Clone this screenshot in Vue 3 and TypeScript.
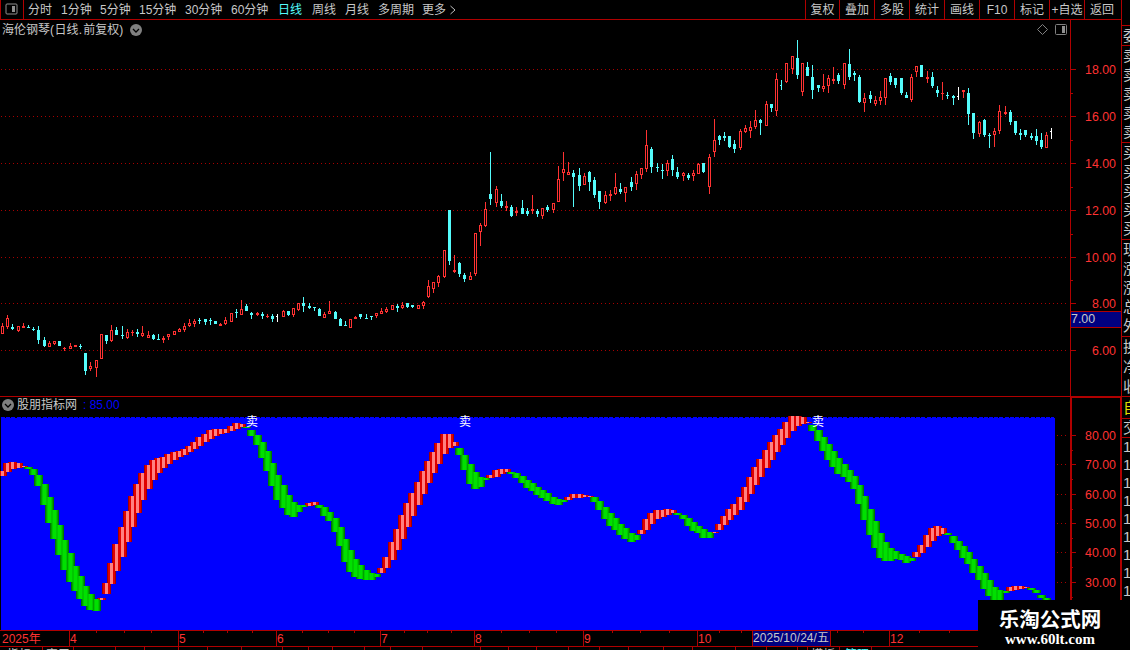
<script setup lang="ts">
type Tone = 'r' | 'c' | 'w'
interface Candle { x: number; hi: number; top: number; bot: number; lo: number; tone: Tone }
interface Bar { x: number; top: number; bot: number; up: boolean }

// x, high, body top, body bottom, low, tone
const candleRows = `
2 323 326 334 334 r|7 315 318 327 329 r|12 324 327 329 330 c|18 326 326 331 332 r|23 323 326 328 328 r|28 325 327 328 328 c|33 327 329 330 331 c|38 326 330 340 344 c|44 337 340 346 347 c|49 341 343 347 347 r|54 341 341 344 345 r|59 341 341 346 346 c|64 347 348 349 351 r|70 343 346 349 349 r|75 345 345 347 347 r|80 344 346 347 349 c|85 353 353 371 375 c|90 362 366 369 371 r|96 360 360 368 377 r|101 334 334 359 359 r
106 335 335 341 344 c|111 325 330 341 342 r|116 327 330 335 335 c|122 326 335 336 339 c|127 329 332 338 339 r|132 330 332 333 336 r|137 329 332 334 337 c|142 326 333 336 337 r|148 331 335 338 338 r|153 334 335 339 340 c|158 334 339 340 340 c|163 336 338 340 343 r|168 334 334 337 340 r|174 331 331 335 335 r|179 328 329 332 332 r|184 323 326 330 332 r|189 319 323 326 327 r|194 319 321 324 327 r|199 318 320 321 324 c
205 319 319 322 325 c|210 318 320 321 325 c|215 321 321 324 324 c|220 323 324 326 326 r|225 317 320 324 325 r|231 313 313 322 322 r|236 309 312 313 318 c|241 300 309 315 315 r|246 304 306 311 311 c|251 312 313 315 319 c|257 312 313 315 316 r|262 312 314 316 319 c|267 314 316 317 318 r|272 314 316 319 322 c|277 314 316 317 322 w|283 310 311 317 317 r|288 311 311 315 316 c|293 308 308 315 317 r|298 303 303 310 311 r
303 297 303 306 312 c|309 303 306 308 309 c|314 307 307 308 311 c|319 308 309 316 316 c|324 312 314 318 318 r|329 301 311 314 314 r|335 311 312 319 319 c|340 318 319 326 326 c|345 321 325 326 326 c|350 319 319 328 328 r|355 316 317 319 319 r|360 314 314 317 319 c|366 314 318 319 319 c|371 316 316 317 320 c|376 313 313 316 318 r|381 308 311 314 314 r|386 307 309 312 313 r|392 305 305 310 310 r|397 304 306 308 312 c
402 302 305 308 309 r|407 303 303 307 308 c|412 305 305 307 308 c|418 305 305 309 309 r|423 301 302 306 309 r|428 280 286 297 298 r|433 282 282 289 293 r|438 275 276 283 287 r|444 250 250 277 278 r|449 210 210 261 265 c|454 255 270 272 273 r|459 262 263 274 277 c|464 273 275 279 282 c|470 272 276 280 280 r|475 233 233 274 276 r|480 223 225 232 246 r|485 202 209 226 227 r|490 152 194 199 205 c|496 186 189 203 207 r
501 194 201 206 208 c|506 201 206 208 211 r|511 205 207 216 217 c|516 207 211 213 216 r|522 200 208 214 214 c|527 208 211 214 216 c|532 195 209 211 214 r|537 209 211 214 217 c|542 208 208 216 219 r|547 205 207 210 212 c|553 203 203 210 213 r|558 166 179 202 202 r|563 152 169 173 181 r|568 162 172 175 175 r|573 170 173 177 207 c|579 168 175 186 191 c|584 173 176 185 185 r|589 171 172 182 191 c|594 177 180 195 198 c
599 191 191 202 209 c|605 191 195 203 204 r|610 190 194 196 201 r|615 173 187 194 195 r|620 183 189 192 194 c|625 187 187 193 202 r|631 177 182 187 191 c|636 171 174 184 190 r|641 168 168 175 179 r|646 130 145 169 172 r|651 147 149 167 173 c|657 163 167 168 172 c|662 164 170 171 179 c|667 160 163 171 176 r|672 155 159 170 176 c|677 167 172 177 179 c|683 172 173 176 181 r|688 173 175 178 180 c|693 170 173 176 181 r
698 163 164 174 174 r|703 163 163 172 173 c|709 154 157 187 194 r|714 119 140 152 157 r|719 135 136 140 145 c|724 132 136 138 141 c|729 136 136 147 148 c|734 140 144 149 153 c|740 129 131 148 150 r|745 125 128 132 133 r|750 121 127 131 138 r|755 110 120 127 129 r|760 119 120 123 135 c|766 101 104 126 126 r|771 104 104 108 112 c|776 73 79 111 116 r|781 80 85 86 90 c|786 63 63 82 83 r|792 56 56 69 74 r
797 40 58 75 79 c|802 63 63 92 96 r|807 62 67 76 76 c|812 65 77 90 99 c|818 85 85 88 92 c|823 74 86 89 92 r|828 75 78 86 93 r|833 67 79 81 84 r|838 73 75 81 84 c|844 63 63 85 89 r|849 49 64 77 80 c|854 71 73 75 81 c|859 75 77 102 103 c|864 93 98 103 112 r|870 91 95 99 103 c|875 96 100 104 106 r|880 91 97 101 105 r|885 78 78 98 105 r|890 73 76 82 85 c|895 78 78 85 88 c
901 78 78 93 95 c|906 92 95 98 98 c|911 74 77 100 102 r|916 66 66 72 77 r|921 65 65 77 77 c|927 71 77 79 83 r|932 72 77 86 88 c|937 86 90 93 97 c|942 82 93 94 100 r|947 92 95 96 99 c|953 95 96 98 105 c|958 87 96 97 100 w|963 90 90 92 98 r|968 88 93 114 125 c|973 113 113 133 139 c|979 121 122 134 137 r|984 119 120 135 137 c|989 133 135 136 148 c|994 128 131 135 147 r
999 105 111 131 134 r|1005 106 112 114 115 r|1010 110 112 122 125 c|1015 121 121 133 135 c|1020 129 133 135 140 c|1025 130 130 135 137 c|1031 133 136 138 140 c|1036 129 136 141 145 c|1041 133 140 147 149 c|1046 132 135 148 148 r|1051 128 131 132 139 w`

const candles: Candle[] = candleRows.trim().split(/[|\n]/).map(s => {
  const p = s.trim().split(' ')
  return { x: +p[0], hi: +p[1], top: +p[2], bot: +p[3], lo: +p[4], tone: p[5] as Tone }
})

// top-bottom of each ribbon bar, one per candle; r = rising, g = falling
const ribbonRuns: [string, string][] = [
  ['r', '471-476 463-472 462-469 463-468 466-467'],
  ['g', '467-469 469-475 475-486 484-505 497-523 510-539 525-555 540-570 553-582 566-591 576-599 586-606 594-610 599-611'],
  ['r', '598-600 583-594 563-584 544-571 527-557 511-542 496-527 484-513 473-500 465-489 460-480 458-473 457-468 454-464 452-460 451-457 449-455 446-452 442-449 437-446 434-442 430-439 429-436 429-434 429-433 426-431 423-429 424-427'],
  ['g', '427-428 430-436 435-445 442-458 451-471 463-486 475-500 485-508 495-515 502-517 505-512 505-507'],
  ['r', '503-506 502-505'],
  ['g', '505-508 507-516 512-521 518-532 527-546 539-562 550-572 559-577 565-579 570-580 573-580 574-577'],
  ['r', '568-573 557-568 542-560 529-550 515-539 503-527 493-516 482-505 471-494 461-483 452-473 443-464 434-454 434-448 442-446'],
  ['g', '448-455 455-470 464-484 472-489 477-487 478-480'],
  ['r', '475-478 470-477 469-474 469-472'],
  ['g', '472-474 473-478 476-483 480-488 483-491 487-495 490-498 493-501 497-504 499-505 500-502'],
  ['r', '497-500 494-498 494-498 495-497 496-497'],
  ['g', '497-502 501-510 507-519 513-526 518-530 524-535 528-539 533-542 535-540'],
  ['r', '530-534 519-530 513-524 510-519 510-517 509-515 510-513'],
  ['g', '513-515 515-519 518-526 522-531 526-533 529-538 532-538'],
  ['r', '532-533 524-530 516-525 509-520 504-515 497-510 487-502 477-494 467-485 459-477 450-468 442-460 435-452 429-445 422-438 416-431 416-426 417-424 422-423'],
  ['g', '425-431 430-441 437-451 444-460 451-467 458-474 464-477 470-482 476-489 485-504 496-520 509-535 521-548 533-558 542-561 548-561 551-559 554-560 556-563 558-561'],
  ['r', '552-557 545-553 535-547 528-541 526-536 528-534'],
  ['g', '533-535 536-543 541-550 546-558 552-564 559-573 566-580 573-589 580-596 587-603 590-601 591-593'],
  ['r', '587-591 586-590 586-589 587-588'],
  ['g', '588-590 590-593 595-598 598-602'],
]
const bars: Bar[] = []
for (const [dir, run] of ribbonRuns) {
  for (const seg of run.split(' ')) {
    const [top, bot] = seg.split('-').map(Number)
    if (bars.length < candles.length) bars.push({ x: candles[bars.length].x, top, bot, up: dir === 'r' })
  }
}

// ribbon shading, widest and darkest layer first
const layers = [
  { half: 4, up: '#a00000', down: '#007800' },
  { half: 3, up: '#e00000', down: '#00a000' },
  { half: 2, up: '#e00000', down: '#00c800' },
  { half: 1, up: '#ff8080', down: '#00e000' },
]

const colour: Record<Tone, string> = { r: '#ff3232', c: '#54fcfc', w: '#ffffff' }
const isTick = (c: Candle) => c.bot - c.top === 1 && (c.tone === 'w' || c.x === 781)
const isHollow = (c: Candle) => c.tone === 'r' && c.bot - c.top > 2

const priceAxis = [['18.00', 69], ['16.00', 116], ['14.00', 163], ['12.00', 210], ['10.00', 257], ['8.00', 303], ['6.00', 350]] as [string, number][]
const priceMinor = [93, 140, 187, 234, 280]
const indAxis = [['80.00', 435], ['70.00', 464], ['60.00', 494], ['50.00', 523], ['40.00', 552], ['30.00', 582]] as [string, number][]
const indMinor = [450, 479, 509, 538, 567, 597]

const periods = [['分时', 33], ['1分钟', 39], ['5分钟', 39], ['15分钟', 46], ['30分钟', 46], ['60分钟', 47], ['日线', 34], ['周线', 33], ['月线', 33], ['多周期', 44], ['更多', 28]] as [string, number][]
const tools = ['复权', '叠加', '多股', '统计', '画线', 'F10', '标记', '+自选', '返回']

const months = [['2025年', -1], ['4', 69], ['5', 178], ['6', 276], ['7', 380], ['8', 474], ['9', 583], ['10', 697], ['12', 889]] as [string, number][]
const weekTicks = [96, 124, 151, 203, 227, 252, 302, 328, 354, 404, 427, 451, 501, 529, 556, 612, 640, 669, 719, 741, 837, 863, 919, 949]
const tabTicks = [42, 73, 115, 144, 178, 207, 241, 282, 308, 332, 364, 390, 422, 480, 508, 536, 568, 599, 628, 663, 692, 735, 766, 797, 807, 839, 871]
const sellMarks = [246, 459, 812]

const sideRows: { t: string; h: number; line?: boolean; k?: string }[] = [
  { t: '', h: 26, line: true }, { t: '委', h: 20, line: true },
  ...['卖', '卖', '卖', '卖', '卖'].map((t, i) => ({ t, h: i === 4 ? 21 : 19, line: i === 4 })),
  ...['买', '买', '买', '买', '买'].map((t, i) => ({ t, h: i === 4 ? 21 : 19, line: i === 4 })),
  ...['现', '涨', '涨', '总', '外'].map((t, i) => ({ t, h: i === 4 ? 21 : 19, line: i === 4 })),
  { t: '换', h: 20 }, { t: '净', h: 20 }, { t: '收', h: 20, line: true },
  { t: '自', h: 22, line: true, k: 'own' }, { t: '交', h: 19, line: true },
  ...Array.from({ length: 9 }, () => ({ t: '1', h: 18, k: 'num' })),
]
</script>

<template>
  <div class="app">
    <div class="main">
      <header class="toolbar">
        <span class="layout">
          <svg width="13" height="12" viewBox="0 0 13 12"><rect x="1" y="1" width="11" height="10" rx="1" fill="none" stroke="#909090" /><rect x="7" y="3" width="3" height="6" fill="#909090" /></svg>
        </span>
        <nav class="periods">
          <span v-for="[t, w] in periods" :key="t" :class="{ active: t === '日线' }" :style="{ width: w + 'px' }">{{ t }}</span>
          <svg width="6" height="10" viewBox="0 0 6 10"><path d="M0.5 1 L5 5 L0.5 9" fill="none" stroke="#c0c0c0" /></svg>
        </nav>
        <nav class="tools"><span v-for="t in tools" :key="t">{{ t }}</span></nav>
      </header>

      <section class="price">
        <svg class="plot" width="1121" height="376" viewBox="0 20 1121 376" shape-rendering="crispEdges">
          <line v-for="[t, y] in priceAxis" :key="t" x1="1" :y1="y + 0.5" x2="1067" :y2="y + 0.5" stroke="#a80000" stroke-dasharray="1 3" />
          <g v-for="c in candles" :key="c.x">
            <rect :x="c.x" :y="c.hi" width="1" :height="Math.max(1, c.lo - c.hi)" :fill="colour[c.tone]" />
            <rect v-if="isTick(c)" :x="c.x - 1" :y="c.top" width="1" height="1" :fill="colour[c.tone]" />
            <rect v-else :x="c.x - 1" :y="c.top" width="3" :height="c.bot - c.top" :fill="colour[c.tone]" />
            <rect v-if="isHollow(c)" :x="c.x" :y="c.top + 1" width="1" :height="c.bot - c.top - 2" fill="#000" />
          </g>
          <rect x="1070" y="20" width="1" height="376" fill="#b00000" />
          <g v-for="[t, y] in priceAxis" :key="'a' + t">
            <rect x="1071" :y="y" width="5" height="1" fill="#b00000" />
            <text class="scale" x="1116" :y="y + 5">{{ t }}</text>
          </g>
          <rect v-for="y in priceMinor" :key="y" x="1071" :y="y" width="2" height="1" fill="#b00000" />
          <rect x="1071" y="311" width="50" height="17" fill="#b00000" />
          <rect x="1071" y="312" width="50" height="15" fill="#000080" />
          <text class="cursor" x="1071" y="323">7.00</text>
          <g shape-rendering="auto" fill="none" stroke="#808080">
            <path d="M1042.5 24.5 L1047.5 29.5 L1042.5 34.5 L1037.5 29.5 Z" />
            <rect x="1055.5" y="24.5" width="11" height="10" rx="1" />
            <rect x="1062" y="26" width="3" height="7" fill="#909090" stroke="none" />
          </g>
        </svg>
        <h1 class="title">海伦钢琴<i>(</i>日线<i>.</i>前复权<i>)</i><svg width="12" height="12" viewBox="0 0 12 12"><circle cx="6" cy="6" r="6" fill="#808080" /><path d="M3 5 L6 8 L9 5" fill="none" stroke="#000" stroke-width="1.3" /></svg></h1>
      </section>

      <section class="indicator">
        <svg class="plot" width="1121" height="234" viewBox="0 396 1121 234" shape-rendering="crispEdges">
          <rect x="0" y="396" width="1121" height="1" fill="#b00000" />
          <rect x="1070" y="396" width="51" height="2" fill="#b00000" />
          <rect x="1070" y="396" width="2" height="234" fill="#b00000" />
          <rect x="1120" y="396" width="1" height="234" fill="#b00000" />
          <rect x="1" y="418" width="1054" height="212" fill="#0000ff" />
          <line x1="1" y1="417.5" x2="1054" y2="417.5" stroke="#0000ff" stroke-dasharray="4 1.2" />
          <g v-for="l in layers" :key="l.half">
            <rect v-for="b in bars" :key="b.x" :x="b.x - l.half" :y="b.top" :width="l.half * 2 + 1" :height="b.bot - b.top" :fill="b.up ? l.up : l.down" />
          </g>
          <text v-for="x in sellMarks" :key="x" class="sell" :x="x" y="426">卖</text>
          <g v-for="[t, y] in indAxis" :key="t">
            <line x1="1057" :y1="y + 0.5" x2="1067" :y2="y + 0.5" stroke="#a80000" stroke-dasharray="1 3" />
            <rect x="1071" :y="y" width="5" height="1" fill="#b00000" />
            <text class="scale" x="1116" :y="y + 5">{{ t }}</text>
          </g>
          <rect v-for="y in indMinor" :key="y" x="1072" :y="y" width="1" height="1" fill="#b00000" />
        </svg>
        <h2 class="title"><svg width="12" height="12" viewBox="0 0 12 12"><circle cx="6" cy="6" r="6" fill="#808080" /><path d="M3 5 L6 8 L9 5" fill="none" stroke="#000" stroke-width="1.3" /></svg>股朋指标网<b>: 85.00</b></h2>
      </section>

      <footer class="timeline">
        <svg width="1121" height="20" viewBox="0 630 1121 20" shape-rendering="crispEdges">
          <rect x="0" y="630" width="1121" height="1" fill="#b00000" />
          <rect x="0" y="646" width="1121" height="1" fill="#b00000" />
          <rect v-for="x in weekTicks" :key="x" :x="x" y="631" width="1" height="2" fill="#b00000" />
          <g v-for="[t, x] in months" :key="t">
            <rect :x="x" y="630" width="1" height="16" fill="#b00000" />
            <text class="month" :x="x < 0 ? 2 : x + 1" y="643">{{ t }}</text>
          </g>
          <rect x="752" y="631" width="79" height="15" fill="#b00000" />
          <rect x="753" y="631" width="77" height="15" fill="#000080" />
          <text class="date" x="753" y="642" textLength="76">2025/10/24/五</text>
          <rect v-for="x in tabTicks" :key="'t' + x" :x="x" y="647" width="1" height="3" fill="#b00000" />
          <text class="tab" x="7" y="659">指标</text>
          <text class="tab" x="46" y="659">窗口</text>
          <text class="tab" x="811" y="659">模板</text>
          <text class="tab on" x="845" y="659">管理</text>
        </svg>
      </footer>
    </div>

    <aside class="side">
      <div v-for="(r, i) in sideRows" :key="i" class="row" :class="[r.k, { line: r.line }]" :style="{ height: r.h + 'px' }">{{ r.t }}</div>
    </aside>

    <div class="brand"><strong>乐淘公式网</strong><span>www.60lt.com</span></div>
  </div>
</template>

<style>
html, body { background: #000; overflow: hidden; }
</style>

<style scoped>
.app { position: relative; width: 1130px; height: 650px; overflow: hidden; display: grid; grid-template-columns: 1121px 9px; background: #000; color: #c8c8c8; font: 12px/18px "Liberation Sans", "Noto Sans CJK SC", sans-serif; }
.main { display: flex; flex-direction: column; height: 650px; }
svg { display: block; }
.toolbar { display: flex; height: 20px; box-sizing: border-box; border-bottom: 1px solid #b00000; }
.layout { width: 24px; box-sizing: border-box; border-left: 1px solid #b00000; border-right: 1px solid #b00000; padding: 3px 0 0 4px; }
.periods { display: flex; flex: 1; align-items: center; padding-left: 4px; white-space: nowrap; }
.periods .active { color: #54fcfc; }
.tools { display: flex; width: 316px; }
.tools span { width: 35px; box-sizing: border-box; border-left: 1px solid #b00000; text-align: center; line-height: 20px; height: 19px; white-space: nowrap; }
.tools span:first-child { width: 34px; }
.tools span:last-child { width: 37px; padding-right: 2px; }
.price, .indicator { position: relative; }
.title { position: absolute; left: 2px; margin: 0; display: flex; align-items: center; font-size: 12px; line-height: 18px; font-weight: 400; white-space: nowrap; }
.title i { font-style: normal; width: 4.6px; display: inline-block; }
.price .title { top: 1px; }
.price .title svg { margin-left: 6px; }
.indicator .title { top: 0; gap: 3px; }
.title b { font-weight: 400; color: #0000ff; margin-left: 3px; font-size: 12px; }
.scale { fill: #ff3232; font-size: 12.4px; text-anchor: end; }
.cursor { fill: #c8c8c8; font-size: 12.4px; }
.sell { fill: #fff; font-size: 12px; }
.month { fill: #ff3232; font-size: 12px; }
.date { fill: #c8c8c8; font-size: 12px; }
.tab { fill: #c8c8c8; font-size: 12px; }
.tab.on { fill: #54fcfc; }
.side { overflow: hidden; box-sizing: border-box; width: 9px; border-left: 1px solid #b00000; }
.row { box-sizing: border-box; padding-left: 1px; display: flex; align-items: center; font-size: 15px; line-height: 16px; white-space: nowrap; }
.row.line { border-bottom: 1px solid #b00000; }
.row.own { color: #e0e000; }
.brand { position: absolute; left: 978px; top: 600px; width: 152px; height: 50px; box-sizing: border-box; padding: 5px 8px 0 0; background: #000; color: #fff; display: flex; flex-direction: column; align-items: center; }
.brand strong { font: 700 20.5px/26px "Noto Sans CJK SC", sans-serif; }
.brand span { font: 700 15px/16px "Liberation Serif", serif; }
</style>
